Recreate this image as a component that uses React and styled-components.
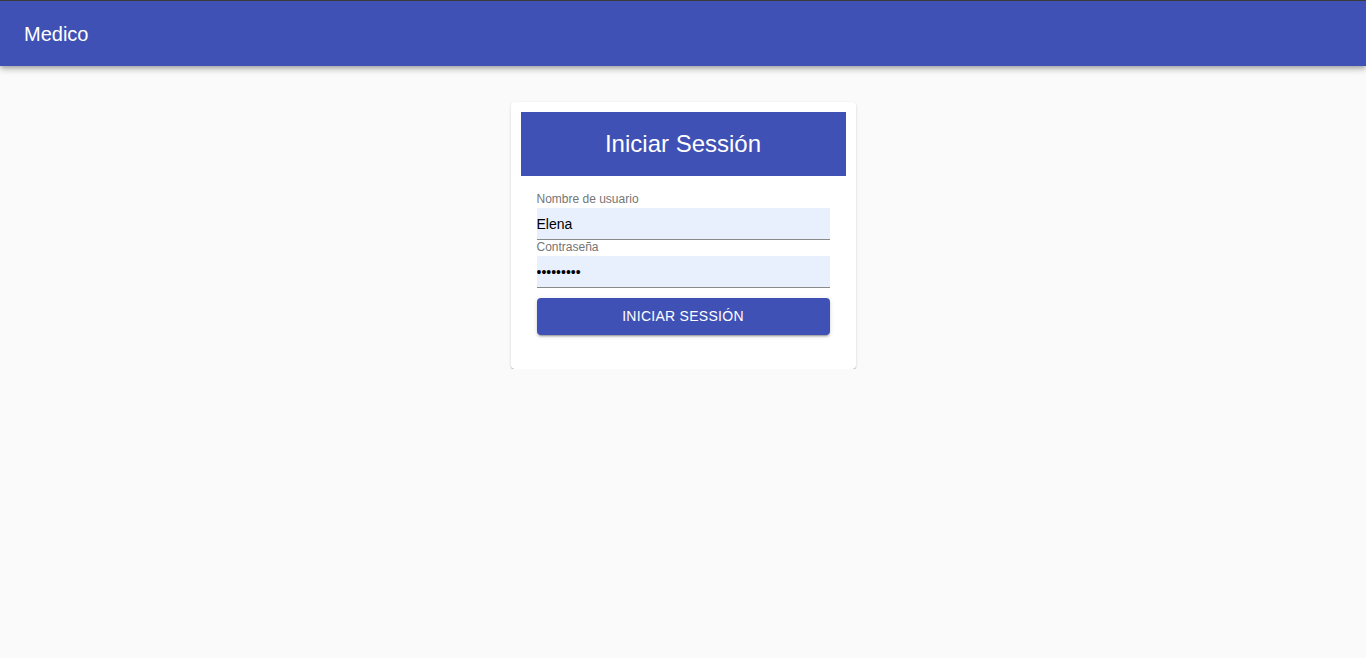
import React from 'react';
import styled, { createGlobalStyle } from 'styled-components';

const GlobalStyle = createGlobalStyle`
  body {
    margin: 0;
    background-color: #fafafa;
    font-family: "Liberation Sans", Arial, sans-serif;
  }
`;

const AppBar = styled.header`
  height: 65px;
  box-sizing: border-box;
  border-top: 1px solid #3a3a3a;
  background-color: #3f51b5;
  color: #fff;
  display: flex;
  align-items: center;
  padding: 2px 24px 0;
  box-shadow: 0px 2px 4px -1px rgba(0, 0, 0, 0.2), 0px 4px 5px 0px rgba(0, 0, 0, 0.14),
    0px 1px 10px 0px rgba(0, 0, 0, 0.12);
  font-size: 20px;
  position: relative;
  z-index: 1;
  height: 66px;
`;

const Main = styled.main`
  display: flex;
  justify-content: center;
  padding-top: 36px;
`;

const Card = styled.div`
  width: 325px;
  padding: 10px;
  background-color: #fff;
  border-radius: 4px;
  box-shadow: 0px 2px 1px -1px rgba(0, 0, 0, 0.25), 0px 1px 1px 0px rgba(0, 0, 0, 0.16),
    0px 1px 3px 0px rgba(0, 0, 0, 0.12);
`;

const CardHeader = styled.div`
  height: 64px;
  background-color: #3f51b5;
  color: #fff;
  font-size: 24px;
  display: flex;
  align-items: center;
  justify-content: center;
`;

const Form = styled.form`
  display: flex;
  flex-direction: column;
  padding: 16px 16px 24px;
`;

const Label = styled.label`
  font-size: 12px;
  line-height: 15px;
  padding-bottom: 1px;
  color: #757575;
`;

const Input = styled.input`
  box-sizing: border-box;
  height: 32px;
  width: 100%;
  border: none;
  border-bottom: 1px solid #8a8a8a;
  background-color: #e8f0fe;
  padding: 0;
  font-family: inherit;
  font-size: 14px;
  color: #000;
  outline: none;
`;

const Button = styled.button`
  margin-top: 10px;
  height: 37px;
  padding: 0 0 2px;
  border: none;
  border-radius: 4px;
  background-color: #3f51b5;
  color: #fff;
  font-family: inherit;
  font-size: 14px;
  letter-spacing: 0.02em;
  text-transform: uppercase;
  cursor: pointer;
  box-shadow: 0px 3px 1px -2px rgba(0, 0, 0, 0.2), 0px 2px 2px 0px rgba(0, 0, 0, 0.14),
    0px 1px 5px 0px rgba(0, 0, 0, 0.12);
`;

export default function App() {
  return (
    <>
      <GlobalStyle />
      <AppBar>Medico</AppBar>
      <Main>
        <Card>
          <CardHeader>Iniciar Sessión</CardHeader>
          <Form onSubmit={(e) => e.preventDefault()}>
            <Label htmlFor="user">Nombre de usuario</Label>
            <Input id="user" type="text" defaultValue="Elena" />
            <Label htmlFor="pass">Contraseña</Label>
            <Input id="pass" type="password" defaultValue="123456789" />
            <Button type="submit">Iniciar Sessión</Button>
          </Form>
        </Card>
      </Main>
    </>
  );
}
